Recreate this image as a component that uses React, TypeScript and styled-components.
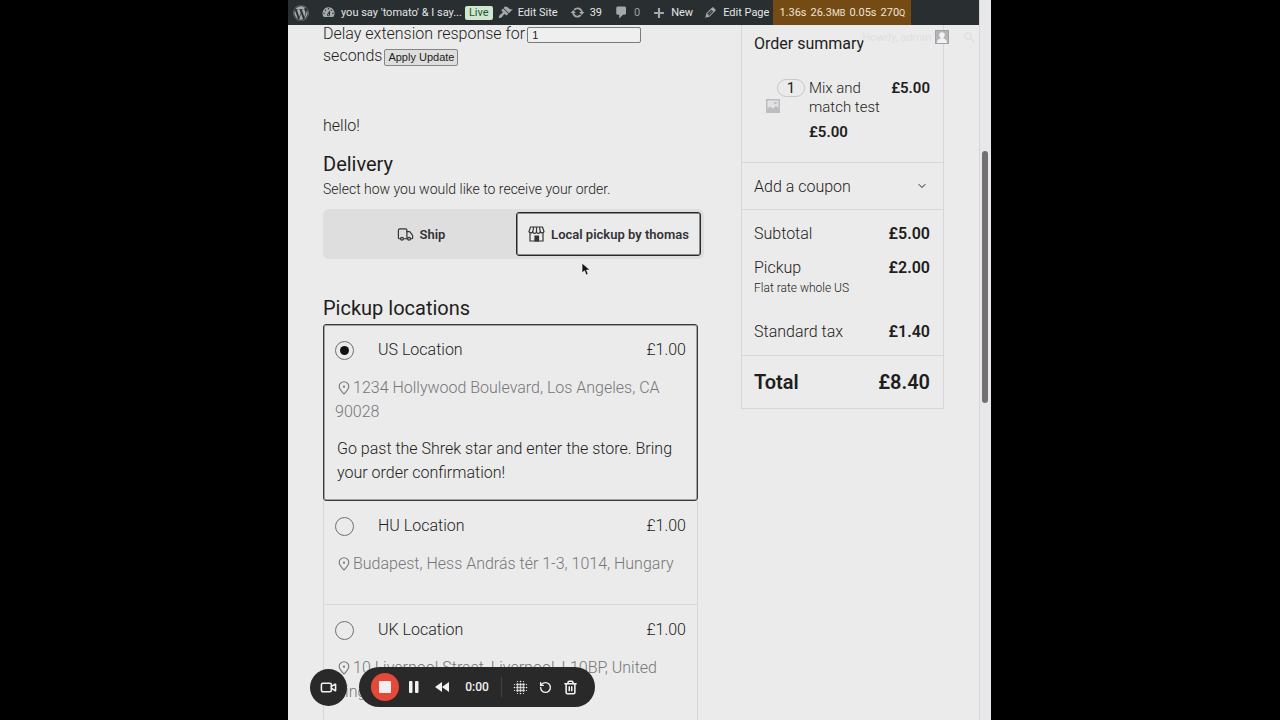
import React, { useState } from "react";
import styled, { createGlobalStyle, css } from "styled-components";
import { FaWordpress } from "react-icons/fa";
import { Video, Truck, ChevronDown, RotateCcw, Trash2 } from "lucide-react";

const ink = "#1e1d20";
const line = "#d8d6d8";
const paper = "#ebebeb";

const GlobalStyle = createGlobalStyle`
  *, *::before, *::after { box-sizing: border-box; }
  body { margin: 0; background: #000; }
  button, input { font: inherit; color: inherit; }
`;

const Stage = styled.div`
  position: relative;
  display: flex;
  height: 100vh;
  overflow: hidden;
  padding: 0 289px 0 288px;
  background: #000;
  color: ${ink};
  font-family: Roboto, "Liberation Sans", sans-serif;
  font-weight: 300;
  font-size: 16px;
`;

const Viewport = styled.div`
  flex: 1;
  min-width: 0;
  overflow: hidden;
  background: ${paper};
`;

const ScrollTrack = styled.div`
  width: 12px;
  padding: 151px 2px 0 2px;
  background: #e8e7e9;
  border-left: 1px solid ${line};
`;

const ScrollThumb = styled.div`
  width: 6px;
  height: 252px;
  border-radius: 3px;
  background: #727073;
`;

const AdminBar = styled.nav`
  position: relative;
  z-index: 1;
  display: flex;
  align-items: center;
  height: 25px;
  padding-left: 5px;
  background: #292e31;
  color: #e4e6e7;
  font-size: 11px;
  font-weight: 400;
  white-space: nowrap;
`;

const AdminLink = styled.a<{ $gap: number; $muted?: boolean }>`
  display: flex;
  align-items: center;
  gap: 5px;
  margin-right: ${(p) => p.$gap}px;
  color: ${(p) => (p.$muted ? "#9a9fa2" : "inherit")};
  text-decoration: none;
  svg { flex: none; color: #a3a8ab; }
`;

const LiveBadge = styled.span`
  margin-right: 5px;
  padding: 0 4px;
  border-radius: 2px;
  background: #cfe6cf;
  color: #1d5a2c;
  line-height: 14px;
`;

const Stats = styled.a`
  display: flex;
  align-items: center;
  gap: 4px;
  height: 25px;
  padding: 0 6px;
  background: #754b15;
  color: #f0e3d2;
  text-decoration: none;
  small { font-size: 9px; }
`;

const Account = styled.div`
  position: absolute;
  top: 30px;
  right: 4px;
  display: flex;
  align-items: center;
  gap: 4px;
  color: #dfdfe0;
  svg:last-child { margin-left: 10px; }
`;

const Content = styled.div`
  display: grid;
  grid-template-columns: minmax(0, 1fr) 203px;
  align-items: start;
  column-gap: 43px;
  padding: 0 35px;
`;

const Main = styled.main`
  margin-top: -3px;
`;

const DelayForm = styled.form`
  height: 93px;
`;

const DelayRow = styled.div`
  display: flex;
  align-items: center;
  gap: 2px;
  height: 22px;
  white-space: nowrap;
`;

const DelayInput = styled.input`
  flex: 1;
  min-width: 0;
  max-width: 114px;
  height: 16px;
  margin-top: 3px;
  padding: 0 4px;
  border: 1px solid #7b7b7b;
  border-radius: 2px;
  background: #efefef;
  font: 400 11px "Liberation Sans", sans-serif;
`;

const ApplyButton = styled.button`
  height: 17px;
  margin-top: 4px;
  padding: 0 3px;
  border: 1px solid #858585;
  border-radius: 2px;
  background: #dedede;
  font: 400 11px "Liberation Sans", sans-serif;
`;

const Greeting = styled.p`
  margin: 0 0 14px;
  line-height: 22px;
`;

const Heading = styled.h2`
  margin: 0;
  font-size: 20px;
  font-weight: 400;
  line-height: 26px;
`;

const Hint = styled.p`
  margin: 2px 0 10px;
  font-size: 14px;
  line-height: 20px;
`;

const MethodToggle = styled.div`
  display: grid;
  grid-template-columns: 190fr 185fr;
  margin: 0 -6px 36px 0;
  padding: 3px;
  border-radius: 6px;
  background: #dedede;
`;

const MethodButton = styled.button<{ $active?: boolean }>`
  display: flex;
  align-items: center;
  justify-content: center;
  gap: 6px;
  height: 44px;
  padding: 0;
  border: 0;
  border-radius: 3px;
  background: none;
  font-size: 13px;
  font-weight: 600;
  white-space: nowrap;
  color: #343336;
  ${(p) =>
    p.$active &&
    css`
      border: 1px solid #29282b;
      box-shadow: inset 0 0 0 1px #8a898c;
      background: ${paper};
    `}
`;

const Locations = styled.div`
  margin-top: 3px;
`;

const Location = styled.label<{ $active?: boolean }>`
  display: grid;
  grid-template-columns: 19px minmax(0, 1fr) auto;
  align-items: center;
  column-gap: 24px;
  padding: 13px 11px 14px 11px;
  border: 1px solid ${line};
  border-top-width: 0;
  line-height: 24px;
  ${(p) =>
    p.$active &&
    css`
      padding-bottom: 15px;
      border: 1px solid #3a393c;
      box-shadow: inset 0 0 0 1px #a3a2a5;
      border-top-width: 1px;
      border-radius: 3px;
    `}
`;

const Radio = styled.input`
  appearance: none;
  display: grid;
  place-items: center;
  width: 19px;
  height: 19px;
  margin: 0;
  border: 1px solid #6f6e71;
  border-radius: 50%;
  &:checked::before {
    content: "";
    width: 9px;
    height: 9px;
    border-radius: 50%;
    background: #111;
  }
`;

const Address = styled.span`
  grid-column: 1 / -1;
  margin-top: 14px;
  color: #77767a;
  svg { margin: 0 2px; vertical-align: -2px; }
`;

const Details = styled.span`
  grid-column: 1 / -1;
  min-height: 1px;
  margin-top: 13px;
  padding-left: 2px;
`;

const Summary = styled.aside`
  border: 1px solid ${line};
  border-top: 0;
`;

const SummaryTitle = styled.h2`
  margin: 0;
  padding: 9px 12px 25px;
  font-size: 16px;
  font-weight: 400;
  line-height: 20px;
`;

const Item = styled.div`
  display: grid;
  grid-template-columns: 39px minmax(0, 1fr) auto;
  column-gap: 4px;
  padding: 0 13px 20px 24px;
  font-size: 15px;
  line-height: 19px;
`;

const Thumb = styled.div`
  display: flex;
  flex-direction: column;
`;

const Quantity = styled.span`
  align-self: flex-end;
  width: 28px;
  margin: 0 0 2px;
  border: 1px solid #c9c7ca;
  border-radius: 9px;
  font-weight: 400;
  line-height: 16px;
  text-align: center;
`;

const ItemName = styled.div`
  b { display: block; margin-top: 6px; }
`;

const Price = styled.b`
  font-weight: 600;
`;

const Coupon = styled.button`
  display: flex;
  align-items: center;
  justify-content: space-between;
  width: 100%;
  height: 48px;
  padding: 0 15px 0 12px;
  border: 0;
  border-top: 1px solid ${line};
  border-bottom: 1px solid ${line};
  background: none;
`;

const Totals = styled.div`
  padding: 14px 13px 13px 12px;
  border-bottom: 1px solid ${line};
`;

const TotalRow = styled.div<{ $space?: number }>`
  display: flex;
  justify-content: space-between;
  margin-bottom: ${(p) => p.$space || 0}px;
  line-height: 20px;
`;

const RateNote = styled.p`
  margin: 0 0 24px;
  font-size: 12px;
  line-height: 20px;
`;

const GrandTotal = styled.div`
  display: flex;
  justify-content: space-between;
  padding: 13px 13px 13px 12px;
  font-size: 20px;
  font-weight: 600;
  line-height: 26px;
`;

const Recorder = styled.div`
  position: absolute;
  left: 310px;
  bottom: 13px;
  display: flex;
  align-items: center;
  gap: 12px;
  color: #f2f2f2;
`;

const IconButton = styled.button<{ $width: number }>`
  display: grid;
  place-items: center;
  width: ${(p) => p.$width}px;
  height: 28px;
  padding: 0;
  border: 0;
  background: none;
`;

const CameraButton = styled(IconButton)`
  height: 37px;
  border-radius: 50%;
  background: #29292a;
`;

const RecorderBar = styled.div`
  display: flex;
  align-items: center;
  height: 40px;
  padding: 0 12px;
  border-radius: 20px;
  background: #29292a;
`;

const StopButton = styled(IconButton)`
  margin-right: 1px;
  border-radius: 50%;
  background: #e5493a;
`;

const Clock = styled.time`
  width: 42px;
  font-size: 12px;
  font-weight: 500;
  text-align: center;
`;

const Divider = styled.span`
  width: 1px;
  height: 20px;
  margin: 0 6px 0 3px;
  background: #414142;
`;

const Cursor = styled.svg`
  position: absolute;
  left: 581px;
  top: 262px;
`;

const Dash = ({ d, size = 15 }: { d: string; size?: number }) => (
  <svg width={size} height={size} viewBox="0 0 20 20" fill="currentColor" fillRule="evenodd" aria-hidden="true">
    <path d={d} />
  </svg>
);

const icons = {
  gauge:
    "M3.76 16h12.48A7.998 7.998 0 0 0 10 3a7.998 7.998 0 0 0-6.24 13zM10 4c.55 0 1 .45 1 1s-.45 1-1 1-1-.45-1-1 .45-1 1-1zM6 6c.55 0 1 .45 1 1s-.45 1-1 1-1-.45-1-1 .45-1 1-1zm8 0c.55 0 1 .45 1 1s-.45 1-1 1-1-.45-1-1 .45-1 1-1zm-5.37 5.55L12 7v6c0 1.1-.9 2-2 2s-2-.9-2-2c0-.57.24-1.08.63-1.45zM4 10c.55 0 1 .45 1 1s-.45 1-1 1-1-.45-1-1 .45-1 1-1zm12 0c.55 0 1 .45 1 1s-.45 1-1 1-1-.45-1-1 .45-1 1-1zm-5 3c0-.55-.45-1-1-1s-1 .45-1 1 .45 1 1 1 1-.45 1-1z",
  brush:
    "M14.48 11.06L7.41 3.99l1.5-1.5c.5-.56 2.3-.47 3.51.32 1.21.8 1.43 1.28 2.91 2.1 1.18.64 2.45 1.26 4.45.85zm-.71.71L6.7 4.7 4.93 6.47c-.39.39-.39 1.02 0 1.41l1.06 1.06c.39.39.39 1.03 0 1.42-.6.6-1.43 1.11-2.21 1.69-.35.26-.7.53-1.01.84C1.43 14.23.4 16.08 1.4 17.07c.99 1 2.84-.03 4.18-1.36.31-.31.58-.66.85-1.02.57-.78 1.08-1.61 1.69-2.21.39-.39 1.02-.39 1.41 0l1.06 1.06c.39.39 1.02.39 1.41 0z",
  update:
    "M10.2 3.28c3.53 0 6.43 2.61 6.92 6h2.08l-3.5 4-3.5-4h2.32c-.45-1.97-2.21-3.45-4.32-3.45-1.45 0-2.73.71-3.54 1.78L4.95 5.66C6.23 4.2 8.11 3.28 10.2 3.28zm-.4 13.44c-3.52 0-6.43-2.61-6.92-6H.8l3.5-4c1.17 1.33 2.33 2.67 3.5 4H5.48c.45 1.97 2.21 3.45 4.32 3.45 1.45 0 2.73-.71 3.54-1.78l1.71 1.95c-1.28 1.46-3.15 2.38-5.25 2.38z",
  comment: "M5 2h9c1.1 0 2 .9 2 2v7c0 1.1-.9 2-2 2h-2l-5 5v-5H5c-1.1 0-2-.9-2-2V4c0-1.1.9-2 2-2z",
  plus: "M17 8.500v3h-5.500V17h-3v-5.500H3v-3h5.500V3h3v5.500z",
  pencil:
    "M13.89 3.39l2.71 2.72c.46.46.42 1.24.03 1.64l-8.01 8.02-5.56 1.16 1.16-5.58s7.6-7.63 7.99-8.03c.39-.39 1.22-.39 1.68.07zm-2.73 2.79l-5.59 5.61 1.11 1.11 5.54-5.65zm-2.97 8.23l5.58-5.6-1.07-1.08-5.59 5.6z",
};

const StoreIcon = () => (
  <svg width="17" height="16" viewBox="0 0 17 16" fill="none" stroke="currentColor" strokeWidth="1.2" aria-hidden="true">
    <path d="M2.500 1h12l1.500 4.500a1.900 1.900 0 0 1-3.700 0 1.900 1.900 0 0 1-3.800 0 1.900 1.900 0 0 1-3.800 0A1.900 1.900 0 0 1 1 5.500zM4.900 5.500L5.600 1M8.500 5.500V1M12.200 5.500L11.500 1M2 7.500V15h13V7.500" />
    <path d="M7 10h3.500v5H7z" fill="currentColor" />
  </svg>
);

const PinIcon = () => (
  <svg width="14" height="14" viewBox="0 0 14 14" fill="none" stroke="currentColor" strokeWidth="1.1" aria-hidden="true">
    <path d="M7 13C5.500 11.300 2.200 8.400 2.200 5.600a4.800 4.800 0 0 1 9.600 0C11.800 8.400 8.500 11.300 7 13z" />
    <circle cx="7" cy="5.700" r="1.100" fill="currentColor" stroke="none" />
  </svg>
);

const ImageIcon = () => (
  <svg width="14" height="14" viewBox="0 0 14 14" aria-hidden="true">
    <path fill="#bdbcbe" d="M0 0h14v14H0z" />
    <path fill="#e2e1e3" d="M1.500 1.500h11V9L10 7 7 9.500 4 7.500l-2.500 2z" />
    <circle cx="9.500" cy="4" r="1.300" fill="#bdbcbe" />
  </svg>
);

const DotsIcon = () => {
  const sizes = [0, 0.6, 0.8, 0.6, 0];
  return (
    <svg width="15" height="15" viewBox="0 0 15 15" fill="currentColor" aria-hidden="true">
      {[0, 1, 2, 3, 4].flatMap((y) =>
        [0, 1, 2, 3, 4].map((x) => {
          const edge = x === 0 || x === 4 || y === 0 || y === 4;
          const r = edge ? (x % 4 === 0 ? sizes[y] : sizes[x]) : 1.2;
          return <circle key={`${x}${y}`} cx={1.5 + x * 3} cy={1.5 + y * 3} r={r} />;
        })
      )}
    </svg>
  );
};

const locations = [
  {
    name: "US Location",
    address: "1234 Hollywood Boulevard, Los Angeles, CA 90028",
    details: "Go past the Shrek star and enter the store. Bring your order confirmation!",
  },
  { name: "HU Location", address: "Budapest, Hess András tér 1-3, 1014, Hungary", details: "" },
  { name: "UK Location", address: "10 Liverpool Street, Liverpool, L10BP, United Kingdom", details: "" },
];

export default function App() {
  const [picked, setPicked] = useState(0);
  return (
    <Stage>
      <GlobalStyle />
      <Viewport>
        <AdminBar>
          <AdminLink href="#" $gap={12} aria-label="WordPress"><FaWordpress size={16} /></AdminLink>
          <AdminLink href="#" $gap={3}><Dash d={icons.gauge} />you say 'tomato' &amp; I say...</AdminLink>
          <LiveBadge>Live</LiveBadge>
          <AdminLink href="#" $gap={12}><Dash d={icons.brush} />Edit Site</AdminLink>
          <AdminLink href="#" $gap={12}><Dash d={icons.update} />39</AdminLink>
          <AdminLink href="#" $gap={12} $muted><Dash d={icons.comment} />0</AdminLink>
          <AdminLink href="#" $gap={10}><Dash d={icons.plus} size={14} />New</AdminLink>
          <AdminLink href="#" $gap={4}><Dash d={icons.pencil} />Edit Page</AdminLink>
          <Stats href="#">
            <span>1.36s</span><span>26.3<small>MB</small></span><span>0.05s</span><span>270<small>Q</small></span>
          </Stats>
          <Account>
            Howdy, admin
            <svg width="14" height="14" viewBox="0 0 14 14" aria-hidden="true">
              <path fill="#a2a1a3" d="M0 0h14v14H0z" />
              <path fill="#b5b4b6" d="M1 1h12v12H1z" />
              <circle cx="7" cy="5" r="2.800" fill="#f2f1f3" />
              <path fill="#f2f1f3" d="M5.500 7h3v1.500c2 .5 3.500 1.500 3.500 4.500H2c0-3 1.500-4 3.500-4.500z" />
            </svg>
            <svg width="12" height="12" viewBox="0 0 12 12" fill="none" stroke="#e2e2e3" strokeWidth="2" aria-hidden="true">
              <circle cx="5" cy="5" r="3" /><path d="M7.500 7.500L11 11" />
            </svg>
          </Account>
        </AdminBar>
        <Content>
          <Main>
            <DelayForm onSubmit={(e) => e.preventDefault()}>
              <DelayRow>
                <label htmlFor="delay">Delay extension response for</label>
                <DelayInput id="delay" defaultValue="1" />
              </DelayRow>
              <DelayRow>
                seconds<ApplyButton>Apply Update</ApplyButton>
              </DelayRow>
            </DelayForm>
            <Greeting>hello!</Greeting>
            <Heading>Delivery</Heading>
            <Hint>Select how you would like to receive your order.</Hint>
            <MethodToggle>
              <MethodButton type="button"><Truck size={17} strokeWidth={1.7} />Ship</MethodButton>
              <MethodButton type="button" $active><StoreIcon />Local pickup by thomas</MethodButton>
            </MethodToggle>
            <Heading>Pickup locations</Heading>
            <Locations>
              {locations.map((l, i) => (
                <Location key={l.name} $active={picked === i}>
                  <Radio type="radio" name="pickup" checked={picked === i} onChange={() => setPicked(i)} />
                  <span>{l.name}</span>
                  <span>£1.00</span>
                  <Address><PinIcon />{l.address}</Address>
                  <Details>{l.details}</Details>
                </Location>
              ))}
            </Locations>
          </Main>
          <Summary>
            <SummaryTitle>Order summary</SummaryTitle>
            <Item>
              <Thumb><Quantity>1</Quantity><ImageIcon /></Thumb>
              <ItemName>Mix and match test<Price>£5.00</Price></ItemName>
              <Price>£5.00</Price>
            </Item>
            <Coupon type="button">Add a coupon<ChevronDown size={12} /></Coupon>
            <Totals>
              <TotalRow $space={14}><span>Subtotal</span><Price>£5.00</Price></TotalRow>
              <TotalRow><span>Pickup</span><Price>£2.00</Price></TotalRow>
              <RateNote>Flat rate whole US</RateNote>
              <TotalRow><span>Standard tax</span><Price>£1.40</Price></TotalRow>
            </Totals>
            <GrandTotal><span>Total</span><span>£8.40</span></GrandTotal>
          </Summary>
        </Content>
      </Viewport>
      <ScrollTrack><ScrollThumb /></ScrollTrack>
      <Cursor width="10" height="15" viewBox="0 0 10 15" aria-hidden="true">
        <path d="M1 1v10l2.500-2.300L5.200 13l2-.9-1.700-4H9z" fill="#151515" stroke="#f6f6f6" strokeWidth="0.700" />
      </Cursor>
      <Recorder>
        <CameraButton type="button" $width={37} aria-label="Camera"><Video size={17} strokeWidth={2.200} /></CameraButton>
        <RecorderBar>
          <StopButton type="button" $width={28} aria-label="Stop">
            <svg width="12" height="12" viewBox="0 0 12 12"><rect width="12" height="12" rx="1" fill="#f5eeee" /></svg>
          </StopButton>
          <IconButton type="button" $width={28} aria-label="Pause">
            <svg width="10" height="12" viewBox="0 0 10 12" fill="currentColor"><rect width="3.500" height="12" rx="1" /><rect x="6" width="3.500" height="12" rx="1" /></svg>
          </IconButton>
          <IconButton type="button" $width={28} aria-label="Rewind">
            <svg width="14" height="10" viewBox="0 0 14 10" fill="currentColor"><path d="M7 0v10L0 5zM14 0v10L7 5z" /></svg>
          </IconButton>
          <Clock>0:00</Clock>
          <Divider />
          <IconButton type="button" $width={25} aria-label="Effects"><DotsIcon /></IconButton>
          <IconButton type="button" $width={25} aria-label="Restart"><RotateCcw size={13} strokeWidth={2.500} /></IconButton>
          <IconButton type="button" $width={25} aria-label="Delete"><Trash2 size={15} strokeWidth={2.500} /></IconButton>
        </RecorderBar>
      </Recorder>
    </Stage>
  );
}
